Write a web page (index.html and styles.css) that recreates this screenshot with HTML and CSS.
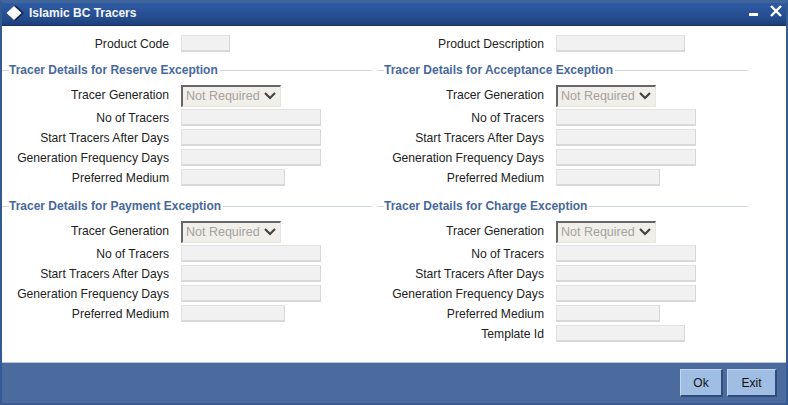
FILE: index.html
```html
<!DOCTYPE html>
<html lang="en">
<head>
<meta charset="utf-8">
<title>Islamic BC Tracers</title>
<link rel="stylesheet" href="styles.css">
</head>
<body>
<div class="window">
  <header class="titlebar">
    <svg class="logo" width="18" height="16" viewBox="0 0 18 16"><path d="M9.500 0 L18 8 L9.500 16 L1 8 Z" fill="#12294f"/><path d="M8 1 L15.500 8 L8 15 L0.500 8 Z" fill="#fff"/></svg>
    <h1 class="title">Islamic BC Tracers</h1>
    <svg class="winbtn" width="34" height="16" viewBox="0 0 34 16"><rect x="0" y="8" width="9" height="3" fill="#fff"/><path d="M22 1 L32 11 M32 1 L22 11" stroke="#fff" stroke-width="2.4" fill="none"/></svg>
  </header>
  <main class="content">
    <div class="top">
      <div class="row"><label class="lbl">Product Code</label><span class="inp w49"></span></div>
      <div class="row"><label class="lbl">Product Description</label><span class="inp w129"></span></div>
    </div>
    <div class="grid">
      <section class="group">
        <h2 class="legend"><span>Tracer Details for Reserve Exception</span></h2>
        <div class="row sel"><label class="lbl">Tracer Generation</label><span class="select">Not Required<svg class="chev" width="12" height="8" viewBox="0 0 12 8"><path d="M1 1 L6 6 L11 1" stroke="#444" stroke-width="2.2" fill="none"/></svg></span></div>
        <div class="row"><label class="lbl">No of Tracers</label><span class="inp w140"></span></div>
        <div class="row"><label class="lbl">Start Tracers After Days</label><span class="inp w140"></span></div>
        <div class="row"><label class="lbl">Generation Frequency Days</label><span class="inp w140"></span></div>
        <div class="row"><label class="lbl">Preferred Medium</label><span class="inp w104"></span></div>
      </section>
      <section class="group">
        <h2 class="legend"><span>Tracer Details for Acceptance Exception</span></h2>
        <div class="row sel"><label class="lbl">Tracer Generation</label><span class="select">Not Required<svg class="chev" width="12" height="8" viewBox="0 0 12 8"><path d="M1 1 L6 6 L11 1" stroke="#444" stroke-width="2.2" fill="none"/></svg></span></div>
        <div class="row"><label class="lbl">No of Tracers</label><span class="inp w140"></span></div>
        <div class="row"><label class="lbl">Start Tracers After Days</label><span class="inp w140"></span></div>
        <div class="row"><label class="lbl">Generation Frequency Days</label><span class="inp w140"></span></div>
        <div class="row"><label class="lbl">Preferred Medium</label><span class="inp w104"></span></div>
      </section>
      <section class="group">
        <h2 class="legend"><span>Tracer Details for Payment Exception</span></h2>
        <div class="row sel"><label class="lbl">Tracer Generation</label><span class="select">Not Required<svg class="chev" width="12" height="8" viewBox="0 0 12 8"><path d="M1 1 L6 6 L11 1" stroke="#444" stroke-width="2.2" fill="none"/></svg></span></div>
        <div class="row"><label class="lbl">No of Tracers</label><span class="inp w140"></span></div>
        <div class="row"><label class="lbl">Start Tracers After Days</label><span class="inp w140"></span></div>
        <div class="row"><label class="lbl">Generation Frequency Days</label><span class="inp w140"></span></div>
        <div class="row"><label class="lbl">Preferred Medium</label><span class="inp w104"></span></div>
      </section>
      <section class="group">
        <h2 class="legend"><span>Tracer Details for Charge Exception</span></h2>
        <div class="row sel"><label class="lbl">Tracer Generation</label><span class="select">Not Required<svg class="chev" width="12" height="8" viewBox="0 0 12 8"><path d="M1 1 L6 6 L11 1" stroke="#444" stroke-width="2.2" fill="none"/></svg></span></div>
        <div class="row"><label class="lbl">No of Tracers</label><span class="inp w140"></span></div>
        <div class="row"><label class="lbl">Start Tracers After Days</label><span class="inp w140"></span></div>
        <div class="row"><label class="lbl">Generation Frequency Days</label><span class="inp w140"></span></div>
        <div class="row"><label class="lbl">Preferred Medium</label><span class="inp w104"></span></div>
        <div class="row"><label class="lbl">Template Id</label><span class="inp w129"></span></div>
      </section>
    </div>
  </main>
  <footer class="footer">
    <button class="btn">Ok</button>
    <button class="btn">Exit</button>
  </footer>
</div>
</body>
</html>
```
FILE: styles.css
```css
* { box-sizing: border-box; }
html, body { margin: 0; padding: 0; }
body { width: 788px; height: 405px; overflow: hidden; font-family: "Liberation Sans", Arial, sans-serif; font-size: 12px; color: #222; }
.window { width: 788px; height: 405px; display: flex; flex-direction: column; background: #3f6196; border-top: 3px solid #40659b; border-left: 2px solid #345a94; border-right: 2px solid #345a94; border-bottom: 2px solid #3c5a8e; }
.titlebar { height: 23px; flex: none; display: flex; align-items: center; padding: 0 3px 2px 4px; background: linear-gradient(#2f5ba4, #234a8b 75%, #1d3f78); border-bottom: 1px solid #17325f; }
.logo { flex: none; }
.title { margin: 0 0 0 5px; flex: 1; font-size: 12px; font-weight: bold; color: #f4f6fa; }
.winbtn { flex: none; margin-top: -1px; }
.content { flex: 1; background: #fff; display: flex; flex-direction: column; padding-top: 9px; min-height: 0; }
.top { display: grid; grid-template-columns: 375px 1fr; }
.grid { display: grid; grid-template-columns: 370px 371px; column-gap: 5px; grid-template-rows: 136px 1fr; margin-top: 7px; }
.group { display: flex; flex-direction: column; }
.row { height: 20px; display: flex; align-items: flex-start; flex: none; }
.row.sel { height: 24px; }
.lbl { width: 167px; text-align: right; margin-right: 12px; flex: none; line-height: 19px; font-size: 12.15px; color: #222; }
.row.sel .lbl { line-height: 21px; }
.inp { display: block; height: 17px; background: #f1f1f1; border: 1px solid #e2e2e2; border-right-color: #d6d6d6; border-bottom: 2px solid #d8d8d8; }
.w49 { width: 49px; }
.w104 { width: 104px; }
.w129 { width: 129px; }
.w140 { width: 140px; }
.select { width: 100px; height: 22px; display: flex; align-items: center; justify-content: space-between; padding: 0 4px 1px 3px; white-space: nowrap; background: #f1efe9; color: #a3a3a0; font-size: 12.5px; border-top: 2px solid #666; border-left: 2px solid #666; border-right: 1px solid #e8e6e0; border-bottom: 1px solid #e8e6e0; }
.chev { flex: none; }
.legend { margin: 0 0 7px 0; height: 16px; display: flex; align-items: center; font-size: 12px; font-weight: bold; color: #47689c; }
.legend::before { content: ""; width: 7px; height: 1px; background: #cdd6dc; }
.legend::after { content: ""; flex: 1; height: 1px; background: #cdd6dc; margin-left: 2px; }
.footer { height: 41px; flex: none; display: flex; justify-content: flex-end; align-items: flex-start; gap: 4px; padding: 6px 9px 0 0; background: #4b6a9e; border-top: 1px solid #b9c6dc; }
.btn { width: 43px; height: 28px; padding: 0; font: 12px "Liberation Sans", Arial, sans-serif; color: #111; background: #a0bde3; border: 1px solid #3a5a8a; border-top-color: #c4d6ee; border-left-color: #c4d6ee; border-right: 2px solid #2f4d7d; border-bottom: 2px solid #2f4d7d; }
.btn + .btn { width: 50px; }
```
